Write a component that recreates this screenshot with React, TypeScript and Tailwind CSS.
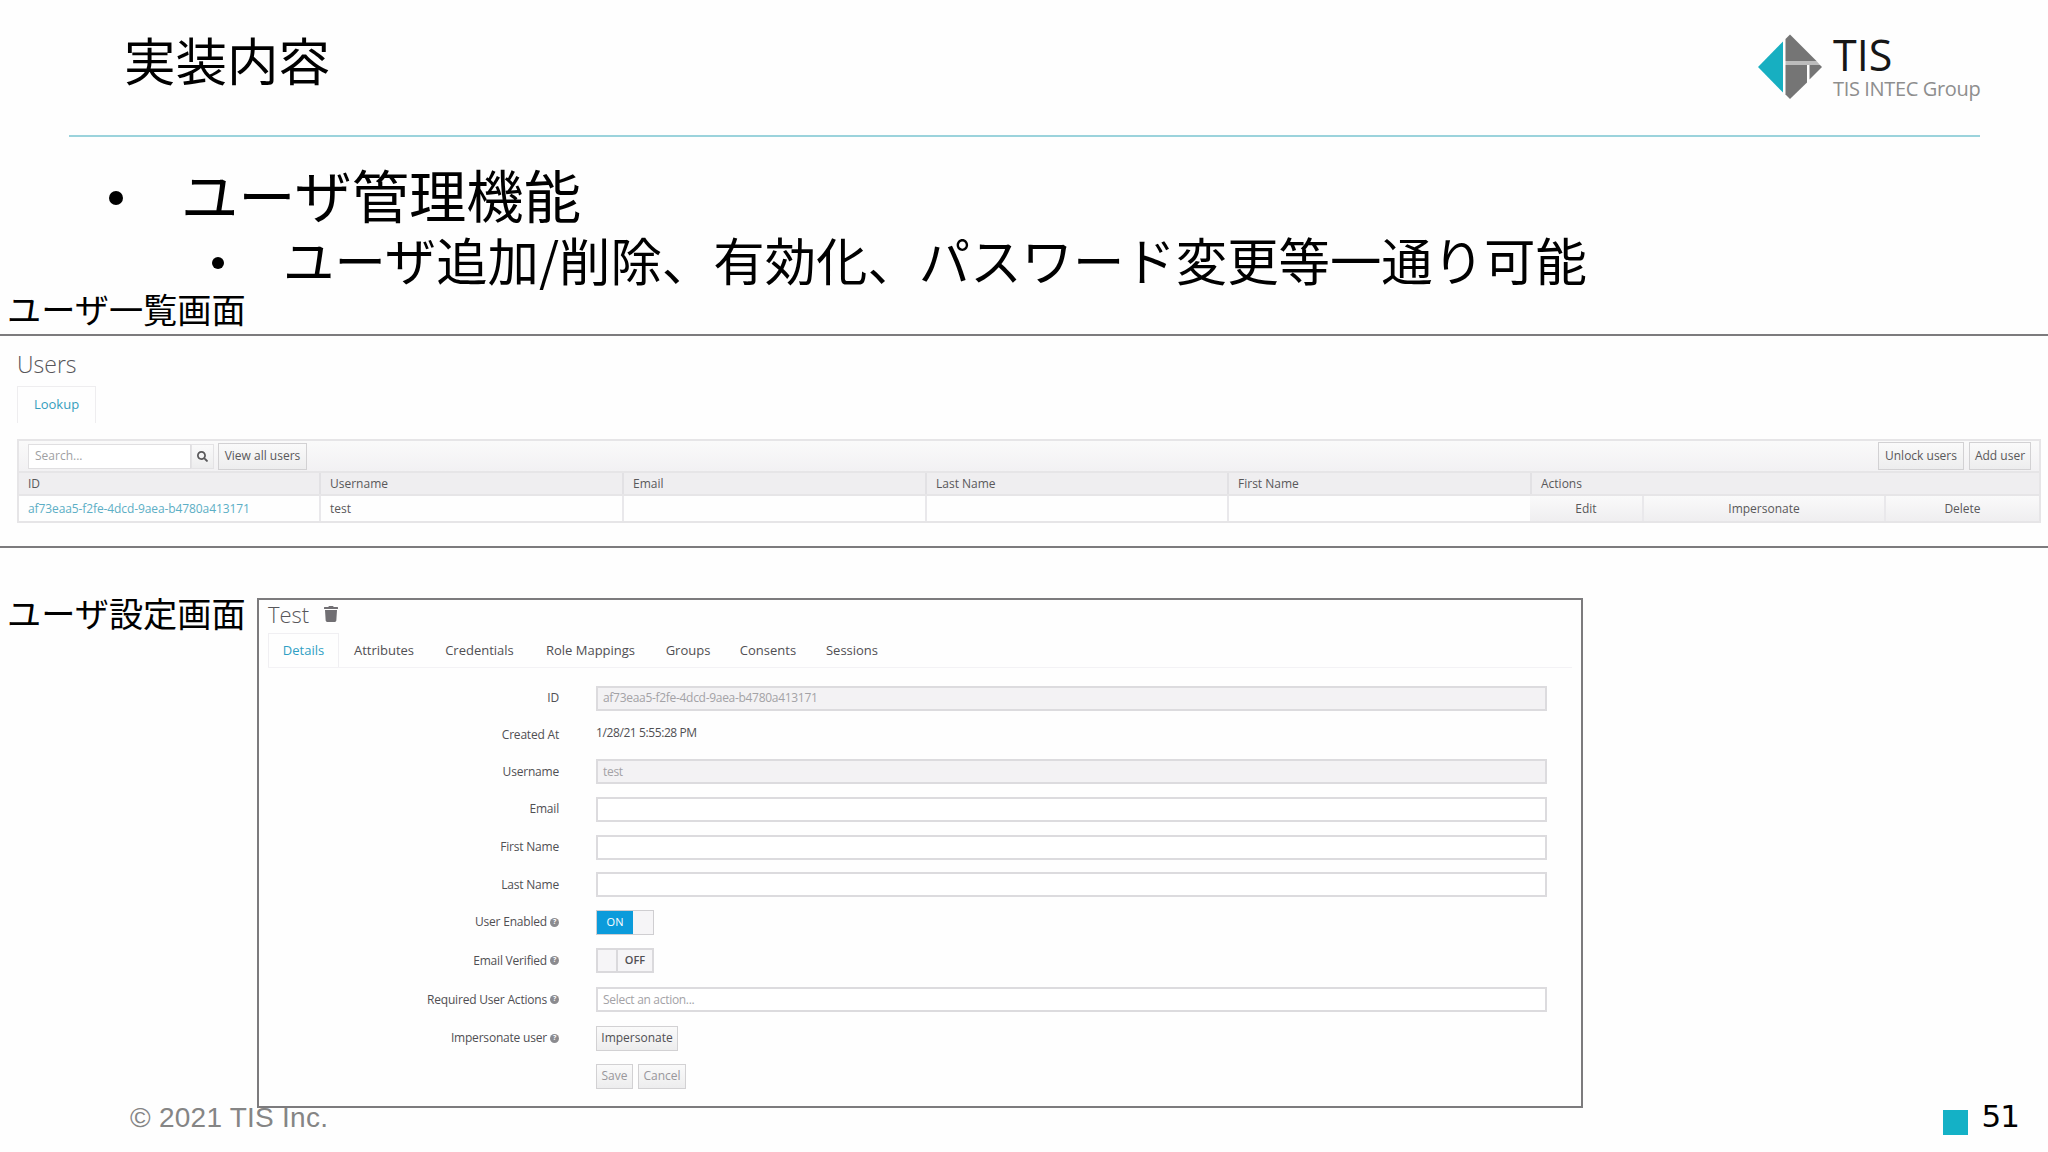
import React from 'react';
import { FaSearch, FaTrash } from 'react-icons/fa';
import clsx from 'clsx';

const USER_ID = 'af73eaa5-f2fe-4dcd-9aea-b4780a413171';

const columns = ['ID', 'Username', 'Email', 'Last Name', 'First Name', 'Actions'];

const tabs = [
  { name: 'Details', width: 'w-[41px]' },
  { name: 'Attributes', width: 'w-[62px]' },
  { name: 'Credentials', width: 'w-[73px]' },
  { name: 'Role Mappings', width: 'w-[93px]' },
  { name: 'Groups', width: 'w-[46px]' },
  { name: 'Consents', width: 'w-[58px]' },
  { name: 'Sessions', width: 'w-[54px]' },
];

const Logo = () => (
  <div className="flex items-start">
    <svg width="64" height="66" viewBox="0 0 64 66" className="mr-[11px] shrink-0">
      <path d="M0 33 L25 7.5 V58.5 Z" fill="#17afc1" />
      <path d="M27.5 5 L32 0.5 L58.5 27 H27.5 Z" fill="#757575" />
      <path d="M27.5 27 H58.5 L62 31 H27.5 Z" fill="#bcbcbc" />
      <path d="M27.5 31 H49 V48.5 L32 65 L27.5 60.5 Z" fill="#757575" />
      <path d="M51.5 31 H62 L64 33 L51.5 45.5 Z" fill="#757575" />
    </svg>
    <div className="flex flex-col font-['Open_Sans',sans-serif] whitespace-nowrap">
      <span className="mt-[-8px] text-[43px] leading-[58px] text-[#161616]">TIS</span>
      <span className="mt-[-9px] text-[20px] leading-[27px] tracking-[-0.35px] text-[#8e8e8e]">TIS INTEC Group</span>
    </div>
  </div>
);

const Button = ({ children, className }: { children: React.ReactNode; className?: string }) => (
  <div
    className={clsx(
      'flex items-center justify-center border border-[#d2d1d3] bg-gradient-to-b from-[#fafafa] to-[#ededee] whitespace-nowrap',
      className
    )}
  >
    {children}
  </div>
);

const Help = () => (
  <span className="ml-[3px] flex size-[9px] items-center justify-center rounded-full bg-[#8b8b8f] text-[7px] font-bold text-white">?</span>
);

interface FieldProps {
  label?: string;
  help?: boolean;
  height: string;
  children: React.ReactNode;
}

const Field = ({ label, help, height, children }: FieldProps) => (
  <div className={clsx('flex items-center', height)}>
    <div className="mr-[37px] flex w-[300px] shrink-0 items-center justify-end tracking-[-0.2px] whitespace-nowrap">
      {label}
      {help && <Help />}
    </div>
    {children}
  </div>
);

const Input = ({ value, disabled }: { value?: string; disabled?: boolean }) => (
  <div
    className={clsx(
      'flex h-[25px] w-[951px] items-center border-2 border-[#dcdbde] pl-[5px] tracking-[-0.3px] text-[#a3a2a6]',
      disabled ? 'bg-[#f3f2f4]' : 'bg-white'
    )}
  >
    {value}
  </div>
);

const UsersTable = () => (
  <div className="h-[214px] border-y-2 border-[#7c7b7d] pl-[17px] pr-[7px] font-['Open_Sans',sans-serif] text-[12px] text-[#59585a]">
    <div className="h-[50px] pt-[13px] text-[23px] leading-[30px] font-light text-[#57565a]">Users</div>
    <div className="flex h-[37px] w-[79px] items-center justify-center border border-b-0 border-[#eeedef] text-[13px] text-[#359dbd]">Lookup</div>
    <div className="mt-[16px] border-2 border-[#e6e5e7]">
      {/* Toolbar */}
      <div className="flex h-[30px] items-center bg-gradient-to-b from-[#fafafa] to-[#f2f1f3] pl-[9px] pr-[8px]">
        <div className="flex h-[25px] w-[163px] items-center border border-[#e0dfe1] bg-white pl-[6px] text-[#a09fa3]">Search...</div>
        <Button className="mr-[4px] h-[25px] w-[23px] border-[#e4e3e5]">
          <FaSearch size={11} />
        </Button>
        <Button className="h-[27px] w-[89px]">View all users</Button>
        <Button className="ml-auto h-[28px] w-[86px]">Unlock users</Button>
        <Button className="ml-[5px] h-[28px] w-[62px]">Add user</Button>
      </div>
      <div className="grid h-[25px] grid-cols-[300px_303px_303px_302px_303px_1fr] border-y-2 border-[#e6e5e7] bg-[#efeef0] leading-[21px]">
        {columns.map((col, i) => (
          <div key={col} className={clsx('pl-[9px]', i > 0 && 'border-l-2 border-[#e2e1e4]')}>{col}</div>
        ))}
      </div>
      <div className="grid h-[25px] grid-cols-[300px_303px_303px_302px_303px_1fr] leading-[25px]">
        <div className="pl-[9px] text-[12px] tracking-[-0.1px] whitespace-nowrap text-[#5caec5]">{USER_ID}</div>
        <div className="border-l-2 border-[#e9e8eb] pl-[9px]">test</div>
        <div className="border-l-2 border-[#e9e8eb]" />
        <div className="border-l-2 border-[#e9e8eb]" />
        <div className="border-l-2 border-[#e9e8eb]" />
        <div className="flex bg-gradient-to-b from-[#fafafa] to-[#efeef0] text-center">
          <div className="w-[112px]">Edit</div>
          <div className="w-[242px] border-l-2 border-[#e9e8eb]">Impersonate</div>
          <div className="flex-1 border-l-2 border-[#e9e8eb]">Delete</div>
        </div>
      </div>
    </div>
  </div>
);

const UserDetails = () => (
  <div className="h-[510px] w-[1326px] border-2 border-[#7c7b7d] font-['Open_Sans',sans-serif] text-[12px] text-[#504f53]">
    <div className="flex h-[33px] items-center pl-[9px] pb-[5px]">
      <span className="text-[22px] font-light leading-[30px] text-[#57565a]">Test</span>
      <FaTrash size={16} className="ml-[14px] text-[#716f73]" />
    </div>
    <div className="mx-[9px] flex h-[35px] border-b border-[#f3f2f5] text-[13px]">
      {tabs.map((tab, i) => (
        <div
          key={tab.name}
          className={clsx(
            'box-content flex items-center justify-center px-[14px] pt-px whitespace-nowrap',
            tab.width,
            i === 0 && 'border border-b-0 border-[#f0eff2] text-[#2f9fc4]'
          )}
        >
          {tab.name}
        </div>
      ))}
    </div>
    <div className="pt-[11px]">
      <Field label="ID" height="h-[38px]"><Input value={USER_ID} disabled /></Field>
      <Field label="Created At" height="h-[36px]"><span className="pb-[5px] tracking-[-0.4px]">1/28/21 5:55:28 PM</span></Field>
      <Field label="Username" height="h-[37px]"><Input value="test" disabled /></Field>
      <Field label="Email" height="h-[38px]"><Input /></Field>
      <Field label="First Name" height="h-[38px]"><Input /></Field>
      <Field label="Last Name" height="h-[37px]"><Input /></Field>
      <Field label="User Enabled" help height="h-[38px]">
        <div className="flex h-[25px] w-[58px] border border-[#cfced1] bg-[#f6f5f7]">
          <div className="flex w-[36px] items-center justify-center bg-[#0b9bdb] text-[11px] text-white">ON</div>
        </div>
      </Field>
      <Field label="Email Verified" help height="h-[39px]">
        <div className="flex h-[25px] w-[58px] border-2 border-[#dad9dc] bg-[#f6f5f7]">
          <div className="w-[20px] border-r-2 border-[#dad9dc]" />
          <div className="flex flex-1 items-center justify-center text-[11px] font-semibold">OFF</div>
        </div>
      </Field>
      <Field label="Required User Actions" help height="h-[39px]"><Input value="Select an action..." /></Field>
      <Field label="Impersonate user" help height="h-[38px]">
        <Button className="h-[25px] w-[82px]">Impersonate</Button>
      </Field>
      <Field height="h-[38px]">
        <Button className="h-[25px] w-[37px] text-[#98979b]">Save</Button>
        <Button className="ml-[5px] h-[25px] w-[48px] text-[#98979b]">Cancel</Button>
      </Field>
    </div>
  </div>
);

export default function App() {
  return (
    <div className="flex h-[1152px] w-[2048px] flex-col overflow-hidden bg-[#fefefe] font-['Noto_Sans_CJK_JP',sans-serif] text-black">
      <header className="ml-[69px] mr-[68px] flex h-[137px] shrink-0 justify-between border-b-2 border-[#9bd3dc] pl-[55px] pt-[34px]">
        <h1 className="mt-[-3px] text-[51.5px] leading-[56px]">実装内容</h1>
        <div className="w-[222px]"><Logo /></div>
      </header>

      <ul className="h-[157px] shrink-0 pt-[27px]">
        <li className="flex h-[68px] items-center text-[57.3px] leading-[58px]">
          <span className="ml-[109px] mr-[58px] size-[14px] rounded-full bg-black" />
          <span className="pb-[9px]">ユーザ管理機能</span>
        </li>
        <li className="flex h-[62px] items-center text-[51.4px] leading-[54px] whitespace-nowrap">
          <span className="ml-[212px] mr-[59px] size-[12px] rounded-full bg-black" />
          <span className="pb-[8px]">ユーザ追加/削除、有効化、パスワード変更等一通り可能</span>
        </li>
      </ul>

      <section className="mt-[-1px] shrink-0">
        <h2 className="h-[41px] pl-[7px] text-[34.2px] leading-[30px]">ユーザ一覧画面</h2>
        <UsersTable />
      </section>

      <section className="mt-[50px] flex shrink-0">
        <h2 className="w-[257px] pl-[7px] text-[34.2px] leading-[28px]">ユーザ設定画面</h2>
        <UserDetails />
      </section>

      <footer className="mt-[-10px] flex h-[52px] shrink-0 items-start justify-between pl-[130px] pr-[29px]">
        <span className="pt-[4px] font-['Liberation_Sans',sans-serif] text-[28px] leading-[32px] tracking-[0.25px] text-[#858585]">© 2021 TIS Inc.</span>
        <div className="flex items-start">
          <span className="mr-[14px] mt-[12px] size-[25px] bg-[#14b1c6]" />
          <span className="font-['DejaVu_Sans',sans-serif] text-[31px] leading-[36px] tracking-[-1px]">51</span>
        </div>
      </footer>
    </div>
  );
}
